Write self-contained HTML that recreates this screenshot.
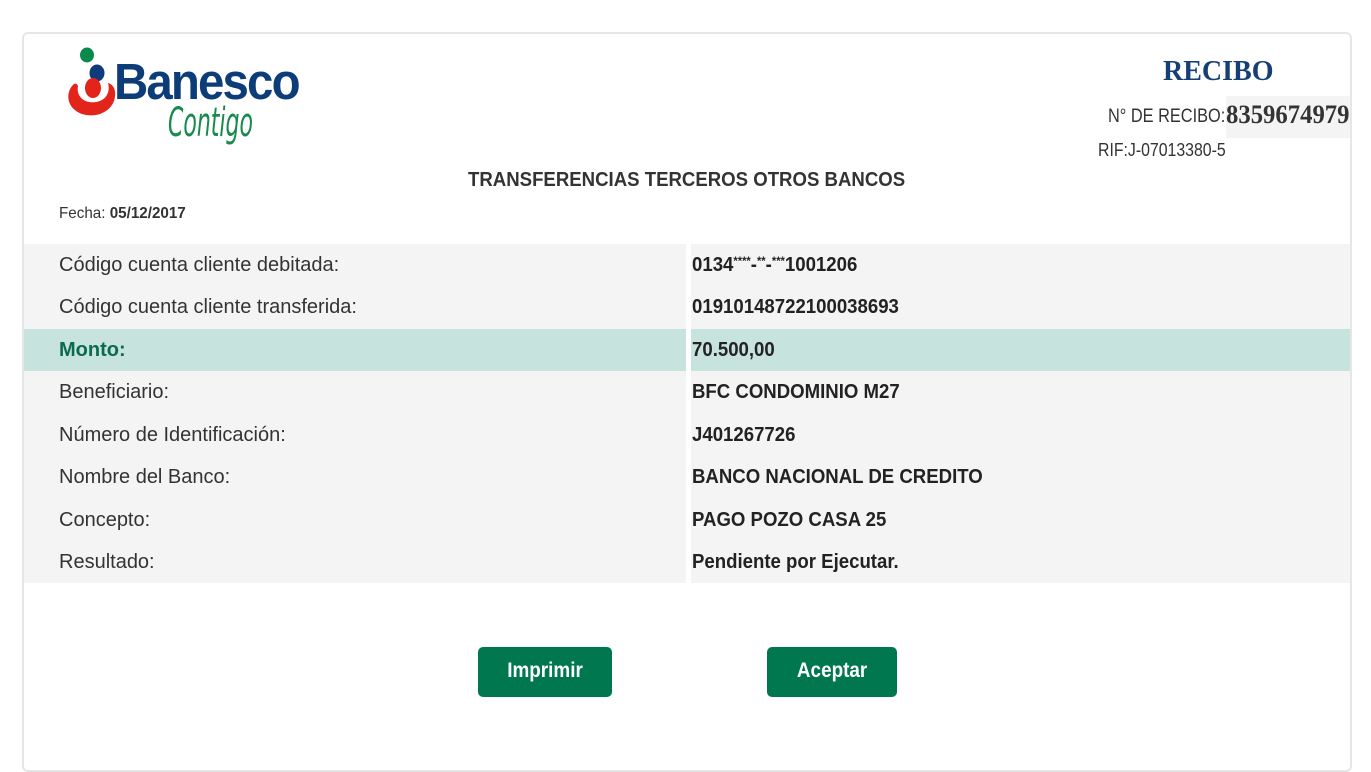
<!DOCTYPE html>
<html><head><meta charset="utf-8"><style>
body{margin:0;width:1371px;height:734px;background:#fff;font-family:"Liberation Sans",Arial,sans-serif;overflow:hidden;position:relative}
.card{position:absolute;left:22px;top:32px;width:1330px;height:740px;border:2px solid #e6e6e6;border-radius:6px;box-sizing:border-box}
.c{display:inline-block;transform:scaleX(1);transform-origin:left center;white-space:nowrap}
.abs{position:absolute}
.bg{position:absolute;top:244px;height:339px;background:#f4f4f4}
.row{position:absolute;left:24px;width:1326px;height:42px}
.row .l,.row .r{position:absolute;top:0;height:100%;font-size:20px;line-height:42px;color:#333}
.row .l{left:0;width:662px;padding-left:35px;box-sizing:border-box}
.row .r{left:667px;width:659px;padding-left:1px;box-sizing:border-box;font-weight:bold;color:#222}
.row .r .c{transform:scaleX(.93)}
.m .l,.m .r{background:#c7e3dd}
.m .l{color:#0b6b4f;font-weight:bold}
.btn{position:absolute;top:647px;height:50px;background:#00774f;border-radius:5px;color:#fff;font-weight:bold;font-size:21px;line-height:48px;text-align:center}
sup{font-size:12px;line-height:0;vertical-align:6px}
</style></head><body>
<div class="card"></div>
<svg class="abs" style="left:64px;top:44px" width="56" height="74" viewBox="0 0 56 74">
<ellipse cx="23" cy="11" rx="7" ry="7.5" fill="#0a8a4a"/>
<ellipse cx="33" cy="29" rx="7.5" ry="8.5" fill="#103b7a"/>
<path d="M10 40 C1 48 2 64 18 70 C34 75 50 66 51 52 C52 44 48 40 44 39 C46 46 44 56 32 58 C20 60 12 52 14 42 C13 40 12 39 10 40Z" fill="#e2241b"/>
<ellipse cx="29" cy="44" rx="8" ry="10" fill="#e2241b"/>
</svg>
<div class="abs" style="left:114px;top:52px;font-size:51px;font-weight:bold;color:#0d3d78;letter-spacing:-2px"><span class="c" style="transform:scaleX(.93)">Banesco</span></div>
<div class="abs" style="left:168px;top:100px;font-size:40px;font-style:italic;color:#178a4c;font-family:'DejaVu Sans',sans-serif"><span class="c" style="transform:scaleX(.55)">Contigo</span></div>
<div class="abs" style="left:1163px;top:56px;font-family:'Liberation Serif',serif;font-weight:bold;font-size:28px;color:#153f76">RECIBO</div>
<div class="abs" style="left:1226px;top:96px;width:124px;height:42px;background:#f4f4f4"></div>
<div class="abs" style="left:1108px;top:106px;font-size:19px;color:#333"><span class="c" style="transform:scaleX(.86)">N° DE RECIBO:</span></div>
<div class="abs" style="left:1226px;top:100px;font-family:'Liberation Serif',serif;font-size:26px;font-weight:bold;color:#333"><span class="c" style="transform:scaleX(.95)">8359674979</span></div>
<div class="abs" style="left:1098px;top:140px;font-size:18px;color:#333"><span class="c" style="transform:scaleX(.88)">RIF:J-07013380-5</span></div>
<div class="abs" style="left:468px;top:169px;font-size:20px;font-weight:bold;color:#333"><span class="c" style="transform:scaleX(.93)">TRANSFERENCIAS TERCEROS OTROS BANCOS</span></div>
<div class="abs" style="left:59px;top:205px;font-size:16px;color:#333"><span class="c" style="transform:scaleX(.95)">Fecha: <b>05/12/2017</b></span></div>

<div class="bg" style="left:24px;width:662px"></div>
<div class="bg" style="left:691px;width:659px"></div>
<div class="row" style="top:244px"><div class="l"><span class="c">Código cuenta cliente debitada:</span></div><div class="r"><span class="c">0134<sup>****</sup>-<sup>**</sup>-<sup>***</sup>1001206</span></div></div>
<div class="row" style="top:286px"><div class="l"><span class="c">Código cuenta cliente transferida:</span></div><div class="r"><span class="c">01910148722100038693</span></div></div>
<div class="row m" style="top:329px"><div class="l"><span class="c">Monto:</span></div><div class="r"><span class="c">70.500,00</span></div></div>
<div class="row" style="top:371px"><div class="l"><span class="c">Beneficiario:</span></div><div class="r"><span class="c">BFC CONDOMINIO M27</span></div></div>
<div class="row" style="top:414px"><div class="l"><span class="c">Número de Identificación:</span></div><div class="r"><span class="c">J401267726</span></div></div>
<div class="row" style="top:456px"><div class="l"><span class="c">Nombre del Banco:</span></div><div class="r"><span class="c">BANCO NACIONAL DE CREDITO</span></div></div>
<div class="row" style="top:499px"><div class="l"><span class="c">Concepto:</span></div><div class="r"><span class="c">PAGO POZO CASA 25</span></div></div>
<div class="row" style="top:541px"><div class="l"><span class="c">Resultado:</span></div><div class="r"><span class="c">Pendiente por Ejecutar.</span></div></div>

<div class="btn" style="left:478px;width:134px"><span class="c" style="transform:scaleX(.9);transform-origin:center">Imprimir</span></div>
<div class="btn" style="left:767px;width:130px"><span class="c" style="transform:scaleX(.9);transform-origin:center">Aceptar</span></div>
</body></html>
